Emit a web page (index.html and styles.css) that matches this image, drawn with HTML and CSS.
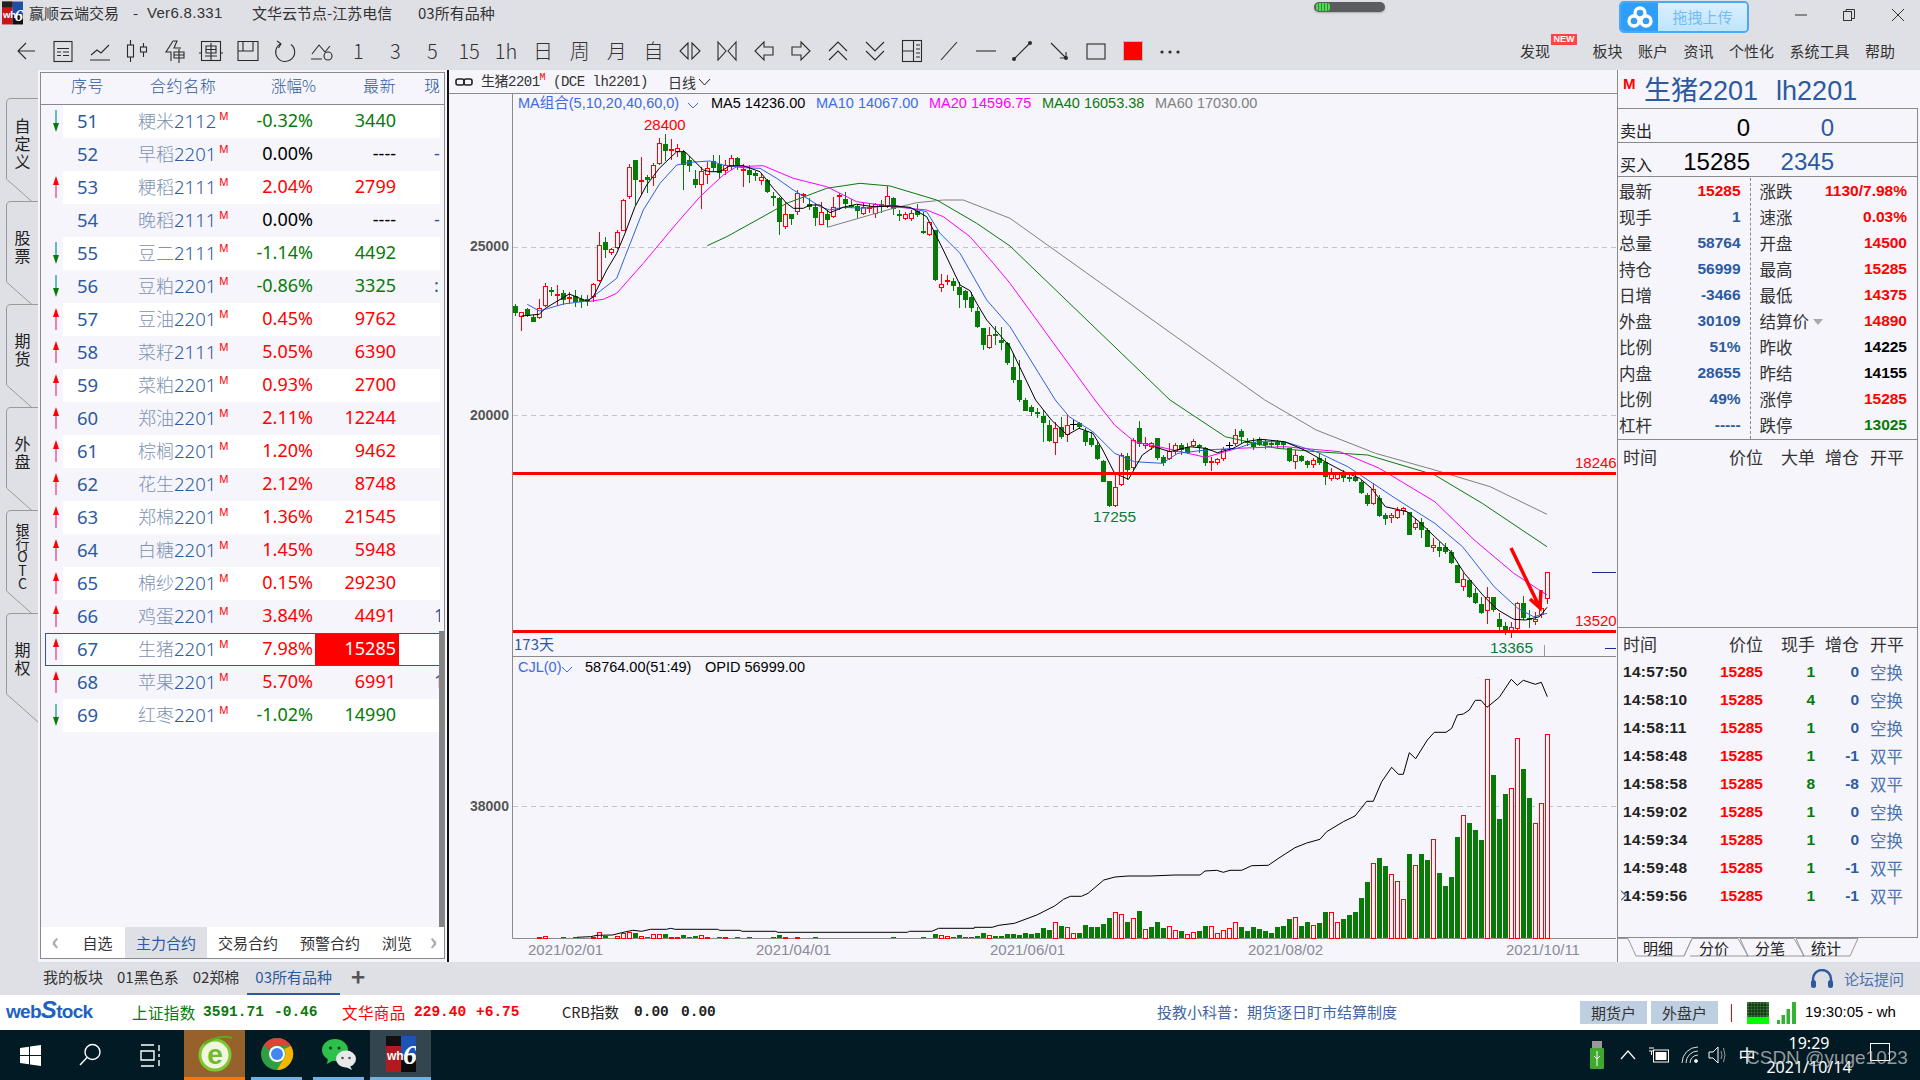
FILE: index.html
```html
<!DOCTYPE html>
<html lang="zh-CN">
<head>
<meta charset="utf-8">
<title>赢顺云端交易</title>
<link rel="stylesheet" href="styles.css">
</head>
<body>
<svg class="sprite" aria-hidden="true">
  <symbol id="up" viewBox="0 0 10 22"><path d="M5 22V6" stroke="#f0508a" stroke-width="1.4"/><path d="M5 0L2 9H8Z" fill="#f00"/></symbol>
  <symbol id="down" viewBox="0 0 10 22"><path d="M5 0V16" stroke="#2aa0a0" stroke-width="1.4"/><path d="M5 22L2 13H8Z" fill="#0a7a0a"/></symbol>
</svg>
<div class="screen">
  <header class="titlebar">
    <svg class="applogo" viewBox="0 0 22 24"><rect width="11" height="24" fill="#c8161d"/><rect x="11" width="11" height="14" fill="#1f4ea3"/><rect x="11" y="14" width="11" height="10" fill="#111"/><rect y="0" width="11" height="6" fill="#222"/><text x="1" y="17" class="logotext">wh</text><text x="13" y="20" class="logotext6">6</text></svg>
    <span class="tt t1">赢顺云端交易</span><span class="tt t2">-</span><span class="tt t3">Ver6.8.331</span><span class="tt t4">文华云节点-江苏电信</span><span class="tt t5">03所有品种</span>
    <div class="pill"><span class="pill-fill"></span></div>
    <div class="upload">
      <span class="upload-ico"><svg width="28" height="24" viewBox="0 0 28 24"><g fill="none" stroke="#fff" stroke-width="3.4"><circle cx="14" cy="8" r="5"/><circle cx="8" cy="16" r="5"/><circle cx="20" cy="16" r="5"/></g></svg></span>
      <span class="upload-txt">拖拽上传</span>
    </div>
    <div class="wbtn"><svg width="14" height="14" viewBox="0 0 14 14"><path d="M1 7H13" stroke="#333"/></svg></div>
    <div class="wbtn"><svg width="14" height="14" viewBox="0 0 14 14" fill="none" stroke="#333"><rect x="1.5" y="3.5" width="8" height="9"/><path d="M4 3.5V1.5H12.5V10.5H9.5"/></svg></div>
    <div class="wbtn wbtn-x"><svg width="14" height="14" viewBox="0 0 14 14"><path d="M1 1L13 13M13 1L1 13" stroke="#333"/></svg></div>
  </header>

  <nav class="toolbar">
    <span class="tb"><svg viewBox="0 0 24 24"><path d="M21 12H4M12 4L4 12L12 20"/></svg></span>
    <span class="tb"><svg viewBox="0 0 24 24"><rect x="3" y="2.5" width="18" height="20"/><path d="M6 9.5H18M6 13H10M12 13H18M6 16.5H10M12 16.5H18"/></svg></span>
    <span class="tb"><svg viewBox="0 0 24 24"><path d="M3 16L9 11L13 14L21 6M2 21H22"/></svg></span>
    <span class="tb"><svg viewBox="0 0 24 24"><rect x="2.5" y="6" width="6" height="12"/><path d="M5.5 1V6M5.5 18V23"/><rect x="15.5" y="8" width="6" height="5"/><path d="M18.5 4V8M18.5 13V18"/></svg></span>
    <span class="tb"><svg viewBox="0 0 24 24"><path d="M11 2L4 13H9V22M11 2H15L12 9H19" /><path d="M12 13H22V19H12ZM12 16H22M17 10V24"/></svg></span>
    <span class="tb"><svg viewBox="0 0 24 24"><rect x="2.5" y="2.5" width="19" height="19"/><path d="M0 14H3M21 14H24M7 7H17V14H7ZM7 10.5H17M12 4V21M6 17H18"/></svg></span>
    <span class="tb"><svg viewBox="0 0 24 24"><path d="M2 2.5H22V21.5H2ZM7 2.5V12H17V2.5M2 12H7"/></svg></span>
    <span class="tb"><svg viewBox="0 0 24 24"><path d="M8 4.5A9.5 9.5 0 1 0 18 5.5M4 2L8 4.8L5.5 9"/></svg></span>
    <span class="tb"><svg viewBox="0 0 24 24"><path d="M2 15L9 6L15 13L20 7M1 20H12"/><circle cx="18" cy="17" r="4"/></svg></span>
    <span class="tb tg">1</span><span class="tb tg">3</span><span class="tb tg">5</span><span class="tb tg">15</span><span class="tb tg">1h</span><span class="tb tg">日</span><span class="tb tg">周</span><span class="tb tg">月</span><span class="tb tg">自</span>
    <span class="tb"><svg viewBox="0 0 24 24"><path d="M10 4L2 12L10 20ZM14 4L22 12L14 20Z"/></svg></span>
    <span class="tb"><svg viewBox="0 0 24 24"><path d="M3 3L11 12L3 21ZM21 3L13 12L21 21Z"/></svg></span>
    <span class="tb"><svg viewBox="0 0 24 24"><path d="M12 3L3 12L12 21V16H21V8H12Z"/></svg></span>
    <span class="tb"><svg viewBox="0 0 24 24"><path d="M12 3L21 12L12 21V16H3V8H12Z"/></svg></span>
    <span class="tb"><svg viewBox="0 0 24 24"><path d="M3 12L12 3L21 12M3 21L12 12L21 21"/></svg></span>
    <span class="tb"><svg viewBox="0 0 24 24"><path d="M3 3L12 12L21 3M3 12L12 21L21 12"/></svg></span>
    <span class="tb"><svg viewBox="0 0 24 24"><rect x="2.5" y="1.5" width="19" height="21"/><path d="M13.5 1.5V22.5M2.5 12H13.5M16 6H20M16 10H20M16 14H20M16 18H20"/></svg></span>
    <span class="tb"><svg viewBox="0 0 24 24"><path d="M4 21L20 3"/></svg></span>
    <span class="tb"><svg viewBox="0 0 24 24"><path d="M2 12H22"/></svg></span>
    <span class="tb"><svg viewBox="0 0 24 24"><path d="M4 20L20 4"/><circle class="dot" cx="4" cy="20" r="2"/><circle class="dot" cx="20" cy="4" r="2"/></svg></span>
    <span class="tb"><svg viewBox="0 0 24 24"><path d="M4 4L19 19M19 13V19H13"/><circle class="dot" cx="19" cy="19" r="2"/></svg></span>
    <span class="tb"><svg viewBox="0 0 24 24"><rect x="3" y="5" width="18" height="15"/></svg></span>
    <span class="tb"><span class="swatch"></span></span>
    <span class="tb"><svg viewBox="0 0 24 24"><circle class="dot" cx="4" cy="13" r="1.6"/><circle class="dot" cx="12" cy="13" r="1.6"/><circle class="dot" cx="20" cy="13" r="1.6"/></svg></span>
    <div class="menu">
      <span class="mi mi-new">发现<em class="new">NEW</em></span>
      <span class="mi">板块</span><span class="mi">账户</span><span class="mi">资讯</span><span class="mi">个性化</span><span class="mi">系统工具</span><span class="mi">帮助</span>
    </div>
  </nav>

  <main class="main">
    <aside class="vtabs">
      <div class="vtab"><svg viewBox="0 0 38 115"><path d="M38 .5H11Q6.500 .5 6.500 5V81L38 109"/></svg><span>自定义</span></div>
      <div class="vtab"><svg viewBox="0 0 38 115"><path d="M38 .5H11Q6.500 .5 6.500 5V81L38 109"/></svg><span>股票</span></div>
      <div class="vtab"><svg viewBox="0 0 38 115"><path d="M38 .5H11Q6.500 .5 6.500 5V81L38 109"/></svg><span>期货</span></div>
      <div class="vtab"><svg viewBox="0 0 38 115"><path d="M38 .5H11Q6.500 .5 6.500 5V81L38 109"/></svg><span>外盘</span></div>
      <div class="vtab"><svg viewBox="0 0 38 115"><path d="M38 .5H11Q6.500 .5 6.500 5V81L38 109"/></svg><span>银行OTC</span></div>
      <div class="vtab"><svg viewBox="0 0 38 115"><path d="M38 .5H11Q6.500 .5 6.500 5V81L38 109"/></svg><span>期权</span></div>
    </aside>

    <section class="list">
      <div class="list-box">
        <div class="lhead">
          <span class="h-no">序号</span><span class="h-name">合约名称</span><span class="h-pct">涨幅%</span><span class="h-last">最新</span><span class="h-trail">现手</span>
        </div>
        <div class="rows">
          <div class="row alt dn"><span class="c-a"><svg><use href="#down"/></svg></span><span class="c-no">51</span><span class="c-name"><i>粳米</i>2112<sup>M</sup></span><span class="c-pct">-0.32%</span><span class="c-last">3440</span><span class="c-trail"></span></div>
          <div class="row fl"><span class="c-a"></span><span class="c-no">52</span><span class="c-name"><i>早稻</i>2201<sup>M</sup></span><span class="c-pct">0.00%</span><span class="c-last">----</span><span class="c-trail">-</span></div>
          <div class="row alt up"><span class="c-a"><svg><use href="#up"/></svg></span><span class="c-no">53</span><span class="c-name"><i>粳稻</i>2111<sup>M</sup></span><span class="c-pct">2.04%</span><span class="c-last">2799</span><span class="c-trail"></span></div>
          <div class="row fl"><span class="c-a"></span><span class="c-no">54</span><span class="c-name"><i>晚稻</i>2111<sup>M</sup></span><span class="c-pct">0.00%</span><span class="c-last">----</span><span class="c-trail">-</span></div>
          <div class="row alt dn"><span class="c-a"><svg><use href="#down"/></svg></span><span class="c-no">55</span><span class="c-name"><i>豆二</i>2111<sup>M</sup></span><span class="c-pct">-1.14%</span><span class="c-last">4492</span><span class="c-trail"></span></div>
          <div class="row dn"><span class="c-a"><svg><use href="#down"/></svg></span><span class="c-no">56</span><span class="c-name"><i>豆粕</i>2201<sup>M</sup></span><span class="c-pct">-0.86%</span><span class="c-last">3325</span><span class="c-trail">:</span></div>
          <div class="row alt up"><span class="c-a"><svg><use href="#up"/></svg></span><span class="c-no">57</span><span class="c-name"><i>豆油</i>2201<sup>M</sup></span><span class="c-pct">0.45%</span><span class="c-last">9762</span><span class="c-trail"></span></div>
          <div class="row up"><span class="c-a"><svg><use href="#up"/></svg></span><span class="c-no">58</span><span class="c-name"><i>菜籽</i>2111<sup>M</sup></span><span class="c-pct">5.05%</span><span class="c-last">6390</span><span class="c-trail"></span></div>
          <div class="row alt up"><span class="c-a"><svg><use href="#up"/></svg></span><span class="c-no">59</span><span class="c-name"><i>菜粕</i>2201<sup>M</sup></span><span class="c-pct">0.93%</span><span class="c-last">2700</span><span class="c-trail"></span></div>
          <div class="row up"><span class="c-a"><svg><use href="#up"/></svg></span><span class="c-no">60</span><span class="c-name"><i>郑油</i>2201<sup>M</sup></span><span class="c-pct">2.11%</span><span class="c-last">12244</span><span class="c-trail"></span></div>
          <div class="row alt up"><span class="c-a"><svg><use href="#up"/></svg></span><span class="c-no">61</span><span class="c-name"><i>棕榈</i>2201<sup>M</sup></span><span class="c-pct">1.20%</span><span class="c-last">9462</span><span class="c-trail"></span></div>
          <div class="row up"><span class="c-a"><svg><use href="#up"/></svg></span><span class="c-no">62</span><span class="c-name"><i>花生</i>2201<sup>M</sup></span><span class="c-pct">2.12%</span><span class="c-last">8748</span><span class="c-trail"></span></div>
          <div class="row alt up"><span class="c-a"><svg><use href="#up"/></svg></span><span class="c-no">63</span><span class="c-name"><i>郑棉</i>2201<sup>M</sup></span><span class="c-pct">1.36%</span><span class="c-last">21545</span><span class="c-trail"></span></div>
          <div class="row up"><span class="c-a"><svg><use href="#up"/></svg></span><span class="c-no">64</span><span class="c-name"><i>白糖</i>2201<sup>M</sup></span><span class="c-pct">1.45%</span><span class="c-last">5948</span><span class="c-trail"></span></div>
          <div class="row alt up"><span class="c-a"><svg><use href="#up"/></svg></span><span class="c-no">65</span><span class="c-name"><i>棉纱</i>2201<sup>M</sup></span><span class="c-pct">0.15%</span><span class="c-last">29230</span><span class="c-trail"></span></div>
          <div class="row up"><span class="c-a"><svg><use href="#up"/></svg></span><span class="c-no">66</span><span class="c-name"><i>鸡蛋</i>2201<sup>M</sup></span><span class="c-pct">3.84%</span><span class="c-last">4491</span><span class="c-trail">1</span></div>
          <div class="row alt up sel"><span class="c-a"><svg><use href="#up"/></svg></span><span class="c-no">67</span><span class="c-name"><i>生猪</i>2201<sup>M</sup></span><span class="c-pct">7.98%</span><span class="c-last">15285</span><span class="c-trail"></span></div>
          <div class="row up"><span class="c-a"><svg><use href="#up"/></svg></span><span class="c-no">68</span><span class="c-name"><i>苹果</i>2201<sup>M</sup></span><span class="c-pct">5.70%</span><span class="c-last">6991</span><span class="c-trail">1</span></div>
          <div class="row alt dn"><span class="c-a"><svg><use href="#down"/></svg></span><span class="c-no">69</span><span class="c-name"><i>红枣</i>2201<sup>M</sup></span><span class="c-pct">-1.02%</span><span class="c-last">14990</span><span class="c-trail"></span></div>
          <span class="scroll"></span>
        </div>
        <div class="ltabs">
          <span class="la">‹</span><span class="lt lt-s">自选</span><span class="lt on">主力合约</span><span class="lt">交易合约</span><span class="lt">预警合约</span><span class="lt lt-b">浏览</span><span class="la la-r">›</span>
        </div>
      </div>
    </section>

    <section class="chart">
      <div class="chead">
        <svg class="link" width="18" height="8" viewBox="0 0 18 8"><g fill="none" stroke="#222" stroke-width="1.6"><rect x="1" y="1" width="8" height="6" rx="2"/><rect x="9" y="1" width="8" height="6" rx="2"/></g></svg>
        <span class="cname">生猪2201<sup>M</sup> (DCE lh2201)</span>
        <span class="cper">日线</span><svg width="13" height="8" viewBox="0 0 13 8"><path d="M1 1L6.500 7L12 1" fill="none" stroke="#222"/></svg>
      </div>
      <svg id="plot" class="plot" viewBox="449 94 1168 868" width="1168" height="868"></svg>
    </section>

    <aside class="side">
      <div class="s-title"><b>M</b><span>生猪2201</span><span class="s-code">lh2201</span></div>
      <div class="s-quote"><label>卖出</label><span class="q1">0</span><span class="q2">0</span></div>
      <div class="s-quote"><label>买入</label><span class="q1">15285</span><span class="q2">2345</span></div>
      <div class="s-info">
        <div class="icol">
          <div class="ir"><label>最新</label><b class="r">15285</b></div>
          <div class="ir"><label>现手</label><b class="bl">1</b></div>
          <div class="ir"><label>总量</label><b class="bl">58764</b></div>
          <div class="ir"><label>持仓</label><b class="bl">56999</b></div>
          <div class="ir"><label>日增</label><b class="bl">-3466</b></div>
          <div class="ir"><label>外盘</label><b class="bl">30109</b></div>
          <div class="ir"><label>比例</label><b class="bl">51%</b></div>
          <div class="ir"><label>内盘</label><b class="bl">28655</b></div>
          <div class="ir"><label>比例</label><b class="bl">49%</b></div>
          <div class="ir"><label>杠杆</label><b class="bl">-----</b></div>
        </div>
        <div class="icol icol-r">
          <div class="ir"><label>涨跌</label><b class="r">1130/7.98%</b></div>
          <div class="ir"><label>速涨</label><b class="r">0.03%</b></div>
          <div class="ir"><label>开盘</label><b class="r">14500</b></div>
          <div class="ir"><label>最高</label><b class="r">15285</b></div>
          <div class="ir"><label>最低</label><b class="r">14375</b></div>
          <div class="ir"><label>结算价<i class="caret"></i></label><b class="r">14890</b></div>
          <div class="ir"><label>昨收</label><b class="k">14225</b></div>
          <div class="ir"><label>昨结</label><b class="k">14155</b></div>
          <div class="ir"><label>涨停</label><b class="r">15285</b></div>
          <div class="ir"><label>跌停</label><b class="g">13025</b></div>
        </div>
      </div>
      <div class="tape">
        <div class="thead thead-a"><span>时间</span><span>价位</span><span>大单</span><span>增仓</span><span>开平</span></div>
      </div>
      <div class="trades">
        <div class="thead"><span>时间</span><span>价位</span><span>现手</span><span>增仓</span><span>开平</span></div>
        <div class="tr"><span>14:57:50</span><b>15285</b><em>1</em><strong>0</strong><u>空换</u></div>
        <div class="tr"><span>14:58:10</span><b>15285</b><em>4</em><strong>0</strong><u>空换</u></div>
        <div class="tr"><span>14:58:11</span><b>15285</b><em>1</em><strong>0</strong><u>空换</u></div>
        <div class="tr"><span>14:58:48</span><b>15285</b><em>1</em><strong>-1</strong><u>双平</u></div>
        <div class="tr"><span>14:58:58</span><b>15285</b><em>8</em><strong>-8</strong><u>双平</u></div>
        <div class="tr"><span>14:59:02</span><b>15285</b><em>1</em><strong>0</strong><u>空换</u></div>
        <div class="tr"><span>14:59:34</span><b>15285</b><em>1</em><strong>0</strong><u>空换</u></div>
        <div class="tr"><span>14:59:48</span><b>15285</b><em>1</em><strong>-1</strong><u>双平</u></div>
        <div class="tr tr-cur"><span>14:59:56</span><b>15285</b><em>1</em><strong>-1</strong><u>双平</u></div>
      </div>
      <div class="stabs">
        <svg class="stabs-bg" viewBox="0 0 303 24"><path d="M0 .5H10L18 18H66L74 .5M74 .5L66 18M74 .5H120L130 18H72M130 18L122 .5M122 .5H176L186 18H128M186 18L178 .5M178 .5H240L232 18H184"/></svg>
        <span>明细</span><span>分价</span><span>分笔</span><span>统计</span>
      </div>
    </aside>
  </main>

  <div class="sheetbar">
    <span>我的板块</span><span>01黑色系</span><span>02郑棉</span><span class="active">03所有品种</span><span class="plus">+</span>
    <span class="forum"><svg width="24" height="20" viewBox="0 0 24 20"><path d="M3 14V10A9 9 0 0 1 21 10V14" fill="none" stroke="#2d5a9e" stroke-width="2.400"/><rect x="1" y="11" width="5" height="8" rx="2.500" fill="#2d5a9e"/><rect x="18" y="11" width="5" height="8" rx="2.500" fill="#2d5a9e"/></svg>论坛提问</span>
  </div>

  <footer class="status">
    <span class="webstock">web<i>S</i>tock</span>
    <span class="tk w71 lab g">上证指数</span><span class="tk w71 num g">3591.71</span><span class="tk w68 num g">-0.46</span>
    <span class="tk w72 lab r">文华商品</span><span class="tk w62 num r">229.40</span><span class="tk w86 num r">+6.75</span>
    <span class="tk w72 lab lab-k k">CRB指数</span><span class="tk w47 num k">0.00</span><span class="tk w47 num k">0.00</span>
    <span class="notice">投教小科普：期货逐日盯市结算制度</span>
    <span class="acct">期货户</span><span class="acct">外盘户</span>
    <span class="redbar"></span>
    <svg class="meter" width="22" height="22" viewBox="0 0 22 22"><rect width="22" height="22" fill="#3c7a3c"/><rect y="15" width="22" height="7" fill="#0f0"/><path d="M0 3H22M0 6H22M0 9H22M0 12H22M3 0V15M6 0V15M9 0V15M12 0V15M15 0V15M18 0V15" stroke="#0a2a0a"/></svg>
    <svg class="bars" width="20" height="22" viewBox="0 0 20 22"><g fill="#34b234"><rect y="18" width="3" height="4"/><rect x="4.500" y="13" width="3.500" height="9"/><rect x="9.500" y="7" width="3.500" height="15"/><rect x="15" y="0" width="4" height="22"/></g></svg>
    <span class="sclock">19:30:05 - wh</span>
  </footer>

  <div class="taskbar">
    <span class="ti"><svg width="21" height="21" viewBox="0 0 21 21"><path d="M0 3L9 1.800V10H0ZM10 1.600L21 0V10H10ZM0 11H9V19.200L0 18ZM10 11H21V21L10 19.400Z" fill="#fff"/></svg></span>
    <span class="ti"><svg width="22" height="24" viewBox="0 0 22 24" fill="none" stroke="#fff" stroke-width="1.400"><circle cx="13.500" cy="9" r="7.500"/><path d="M8 14.500L1 22"/></svg></span>
    <span class="ti"><svg width="21" height="23" viewBox="0 0 21 23" fill="none" stroke="#fff" stroke-width="1.400"><path d="M1 7H14V16H1ZM1 1H14M1 22H14M19 1V7M19 10V13M19 16V22"/></svg></span>
    <span class="app app-ie"><svg width="38" height="38" viewBox="0 0 38 38"><circle cx="19" cy="20" r="15" fill="#f1f6df"/><circle cx="19" cy="20" r="15" fill="none" stroke="#7dc832" stroke-width="3"/><path d="M8 9Q24-1 36 3" fill="none" stroke="#63a91e" stroke-width="2"/><text x="19" y="29" class="ie-e">e</text></svg></span>
    <span class="app app-b"><svg width="34" height="34" viewBox="0 0 34 34"><circle cx="17" cy="17" r="16" fill="#2f9e44"/><path d="M17 1A16 16 0 0 1 31 9L17 9A8 8 0 0 0 9 13L4 8A16 16 0 0 1 17 1Z" fill="#db4437"/><path d="M31 9A16 16 0 0 1 17 33L24 21A8 8 0 0 0 24 12Z" fill="#f4b400"/><circle cx="17" cy="17" r="8" fill="#fff"/><circle cx="17" cy="17" r="6" fill="#4285f4"/></svg></span>
    <span class="app app-b"><svg width="36" height="32" viewBox="0 0 36 32"><ellipse cx="14" cy="12" rx="13" ry="11" fill="#2dc04b"/><path d="M7 20L6 26L13 22Z" fill="#2dc04b"/><circle cx="9.500" cy="10" r="1.500" fill="#0b3b1b"/><circle cx="18" cy="10" r="1.500" fill="#0b3b1b"/><ellipse cx="25" cy="21" rx="10" ry="8.500" fill="#e8e8e8"/><path d="M29 28L31 32L25 29Z" fill="#e8e8e8"/><circle cx="21.500" cy="20" r="1.300" fill="#555"/><circle cx="28.500" cy="20" r="1.300" fill="#555"/></svg></span>
    <span class="app app-wh"><svg width="30" height="36" viewBox="0 0 30 36"><rect width="15" height="36" fill="#b31a1f"/><rect width="15" height="10" fill="#111"/><rect x="15" width="15" height="20" fill="#1d54b4"/><rect x="15" y="20" width="15" height="16" fill="#0b0b0b"/><text x="1" y="24" class="wh-t">wh</text><text x="17" y="28" class="wh-6">6</text></svg></span>
    <div class="tray">
      <span class="tr-i tr-usb"><svg width="14" height="28" viewBox="0 0 14 28"><rect x="2" y="0" width="10" height="8" fill="#999"/><rect y="7" width="14" height="21" rx="1" fill="#3fa82e"/><path d="M7 10V25M4 15L7 18L10 15" stroke="#fff" fill="none"/></svg></span>
      <span class="tr-i"><svg width="16" height="10" viewBox="0 0 16 10"><path d="M1 9L8 1L15 9" fill="none" stroke="#fff" stroke-width="1.200"/></svg></span>
      <span class="tr-i"><svg width="20" height="16" viewBox="0 0 20 16"><rect x="4.500" y="3" width="15" height="12" fill="#111" stroke="#fff"/><rect x="6.500" y="5" width="11" height="8" fill="#fff"/><path d="M0 1H5M0 4H5M2.500 4V8" stroke="#fff"/></svg></span>
      <span class="tr-i"><svg width="18" height="18" viewBox="0 0 18 18" fill="none" stroke="#ddd"><path d="M1 17A16 16 0 0 1 17 1M5 17A12 12 0 0 1 17 5M9 17A8 8 0 0 1 17 9"/><circle cx="15" cy="15" r="1.500" fill="#fff"/></svg></span>
      <span class="tr-i tr-s"><svg width="18" height="20" viewBox="0 0 18 20" fill="none" stroke="#fff"><path d="M1 7H5L10 2V18L5 13H1Z"/><path d="M13 6Q15 10 13 14M15.500 3Q18.500 10 15.500 17" stroke="#999"/></svg></span>
      <span class="tr-i tr-ime">中</span>
      <span class="tr-clock">19:29<br>2021/10/14</span>
      <span class="tr-note"></span>
    </div>
    <span class="watermark">CSDN @yuge1023</span>
  </div>
</div>
<script src="chart.js"></script>
</body>
</html>
```

FILE: styles.css
```css
* { box-sizing: border-box; }
html, body { margin: 0; width: 1920px; height: 1080px; overflow: hidden; }
body { font-family: "Noto Sans CJK SC", "Liberation Sans", sans-serif; color: #222; background: #dfe0e5; }
.sprite { position: absolute; width: 0; height: 0; }
.screen { display: flex; flex-direction: column; width: 1920px; height: 1080px; }

/* title bar */
.titlebar { height: 33px; display: flex; align-items: flex-start; position: relative; flex: none; }
.applogo { width: 21px; height: 24px; margin: 1px 0 0 2px; flex: none; }
.logotext { font: bold 10px "Liberation Sans", sans-serif; fill: #fff; }
.logotext6 { font: italic bold 18px "Liberation Serif", serif; fill: #fff; }
.tt { font-size: 15px; line-height: 20px; margin-top: 3px; color: #333; white-space: nowrap; }
.t1 { margin-left: 6px; width: 90px; }
.t2 { margin-left: 14px; width: 14px; }
.t3 { width: 105px; font-family: "Liberation Sans", sans-serif; letter-spacing: .3px; }
.t4 { width: 166px; }
.t5 { width: 80px; }
.pill { margin: 2px 234px 0 auto; width: 71px; height: 10px; background: #5a5c60; border-radius: 5px; padding: 1px 2px; box-shadow: 0 1px 2px #aaa; flex: none; }
.pill-fill { display: block; width: 14px; height: 8px; border-radius: 3px; background: repeating-linear-gradient(90deg, #4ddb4d 0 2px, #2f8f3f 2px 3px); }
.upload { width: 130px; height: 32px; margin: 1px 28px 0 0; border: 2px solid #4aa8f4; border-radius: 5px; display: flex; overflow: hidden; flex: none; }
.upload-ico { width: 37px; background: #2f9ef8; display: flex; align-items: center; justify-content: center; }
.upload-txt { flex: 1; background: linear-gradient(#d9effe, #bfe4fe); color: #74bdf3; font-size: 15px; line-height: 28px; text-align: center; }
.wbtn { width: 48px; height: 30px; display: flex; align-items: center; justify-content: center; flex: none; }
.wbtn-x { width: 44px; margin-left: 3px; }

/* toolbar */
.toolbar { height: 37px; display: flex; align-items: center; padding: 0 0 2px 8px; flex: none; }
.tb { flex: 0 0 36.900px; height: 24px; display: flex; align-items: center; justify-content: center; }
.tb svg { width: 24px; height: 24px; fill: none; stroke: #2a2a2a; stroke-width: 1.100; }
.tb svg .dot { fill: #2a2a2a; stroke: none; }
.tg { font-size: 20px; font-weight: 300; line-height: 24px; color: #333; font-family: "Noto Sans CJK SC", sans-serif; }
.swatch { width: 20px; height: 20px; background: #f00; border: 1px solid #bbb; }
.menu { margin-left: auto; padding-right: 25px; display: flex; gap: 15.500px; }
.mi { font-size: 15px; line-height: 22px; color: #333; position: relative; white-space: nowrap; }
.mi-new { margin-right: 27px; }
.new { position: absolute; left: 31px; top: -6px; width: 26px; height: 11px; background: #f44; color: #fff; font: bold 9px/11px "Liberation Sans", sans-serif; text-align: center; }

/* main */
.main { height: 892px; display: flex; flex: none; }
.vtabs { width: 38px; padding-top: 28px; flex: none; }
.vtab { height: 103px; position: relative; display: flex; justify-content: center; padding-left: 7px; }
.vtab svg { position: absolute; left: 0; top: 0; width: 38px; height: 115px; }
.vtab path { fill: #dfe0e5; stroke: #9a9a9a; stroke-width: 1; }
.vtab span { position: relative; height: 94px; writing-mode: vertical-rl; text-orientation: upright; font-size: 16px; line-height: 20px; letter-spacing: 2px; text-align: center; color: #222; }
.vtab:nth-child(5) span { font-size: 14px; letter-spacing: -.5px; }

.list { width: 409px; flex: none; background: #f5f5fb; padding: 2px 2px 3px 2px; position: relative; }
.list-box { height: 887px; border: 1px solid #8a8a8a; display: flex; flex-direction: column; }
.lhead { height: 32px; flex: none; border-bottom: 1px solid #8a8a8a; display: flex; font-size: 16px; line-height: 24px; color: #2d5a9e; letter-spacing: .6px; font-weight: 300; overflow: hidden; white-space: nowrap; }
.h-no { margin-left: 30px; width: 79px; }
.h-name { width: 121px; }
.h-pct { width: 92px; letter-spacing: 0; font-size: 15.500px; }
.h-last { width: 61px; }
.h-trail { width: 16px; overflow: hidden; position: relative; }
.h-trail::after { content: "›"; position: absolute; right: 0; top: 0; font-size: 20px; line-height: 22px; }
.rows { flex: 1; position: relative; min-height: 0; }
.row { height: 33px; width: 399px; display: grid; grid-template-columns: 22px 75px 106px 71px 84px 41px; align-items: center; font-size: 18px; line-height: 29px; white-space: nowrap; font-family: "Noto Sans", "Noto Sans CJK SC", sans-serif; }
.row > span { margin-bottom: 2px; }
.row.alt { background: linear-gradient(90deg, transparent 22px, #fff 22px); }
.c-a { height: 22px; display: flex; justify-content: center; padding-left: 8px; }
.c-a svg { width: 10px; height: 22px; }
.c-no { padding-left: 14px; color: #2d5a9e; font-size: 18.500px; }
.c-name { color: #2d5a9e; font-weight: 300; font-size: 18.500px; }
.c-name i { font-style: normal; color: #7d91b3; font-family: "Noto Sans CJK SC", sans-serif; font-size: 18px; }
.c-name sup { color: #f00; font-size: 11px; line-height: 1; vertical-align: 8px; margin-left: 3px; font-family: "Liberation Sans", sans-serif; }
.c-pct { text-align: right; padding-right: 2px; }
.c-last { text-align: right; padding-right: 3px; }
.c-trail { padding-left: 35px; overflow: hidden; color: #2d5a9e; }
.up .c-pct, .up .c-last { color: #f00; }
.dn .c-pct, .dn .c-last { color: #087a08; }
.fl .c-pct, .fl .c-last { color: #000; }
.sel { position: relative; background: linear-gradient(90deg, transparent 22px, #fff 22px); }
.sel::after { content: ""; position: absolute; left: 4px; right: 0; top: 0; bottom: 0; border: 1.500px solid #2d5a9e; pointer-events: none; }
.sel .c-last { background: #f00; color: #fff; margin-bottom: 0; height: 31px; }
.scroll { position: absolute; right: 0; top: 526px; bottom: 0; width: 5px; background: #848484; }
.ltabs { height: 31px; flex: none; background: #fff; display: flex; align-items: stretch; font-size: 15px; line-height: 32px; color: #333; text-align: center; }
.la { flex: 0 0 29px; color: #aaa; font-size: 24px; line-height: 26px; font-weight: bold; }
.la-r { flex: 1 1 0; }
.lt { flex: 0 0 82px; }
.lt-s { flex-basis: 55px; }
.lt-b { flex-basis: 52px; }
.lt.on { background: #dfe0e5; color: #2d5a9e; }

.chart { width: 1170px; flex: none; border-left: 2px solid #111; background: #f5f5fb; display: flex; flex-direction: column; }
.chead { height: 24px; flex: none; border-bottom: 1px solid #8a8a8a; display: flex; align-items: center; padding-left: 6px; }
.link { margin-right: 8px; }
.cname { width: 187px; font: 14px/22px "Liberation Mono", "Noto Sans CJK SC", monospace; color: #333; white-space: nowrap; letter-spacing: -.5px; }
.cname sup { font-size: 10px; color: #f00; line-height: 1; vertical-align: 6px; }
.cper { font-size: 14px; line-height: 22px; color: #333; margin-right: 2px; }
.plot { display: block; }
.plot text { font-family: "Liberation Sans", sans-serif; font-size: 14.500px; }
.plot .ax { fill: #555; font-weight: bold; font-size: 14px; }
.plot .dt { fill: #8a8a98; font-size: 15px; }
.plot .m0 { fill: #4169e1; }
.plot .m1 { fill: #000; }
.plot .m2 { fill: #3a6ee8; }
.plot .m3 { fill: #f0f; }
.plot .m4 { fill: #0a7a0a; }
.plot .m5 { fill: #808080; }
.plot .red { fill: #f00; font-size: 15px; }
.plot .grn { fill: #0a7a3a; font-size: 15.500px; }
.plot .days { fill: #2d5a9e; font-size: 15px; font-family: "Noto Sans CJK SC", sans-serif; }
.plot .m0c { font-family: "Liberation Sans", "Noto Sans CJK SC", sans-serif; }

/* side panel */
.side { width: 303px; flex: none; background: #f5f5fb; border-left: 1px solid #8a8a8a; display: flex; flex-direction: column; position: relative; }
.side > div { width: 300px; border-right: 1px solid #8a8a8a; }
.s-title { height: 39px; border-bottom: 1px solid #8a8a8a; display: flex; align-items: center; color: #2d5a9e; font-size: 27px; line-height: 36px; padding: 3px 0 0 26px; position: relative; border-right: 0 !important; font-family: "Liberation Sans", "Noto Sans CJK SC", sans-serif; }
.s-title b { position: absolute; left: 5px; top: 6px; font-size: 15px; line-height: 16px; color: #f00; }
.s-code { margin-left: 18px; }
.s-quote { height: 34px; border-bottom: 1px solid #8a8a8a; display: flex; align-items: center; font-family: "Liberation Sans", sans-serif; font-size: 24px; line-height: 30px; position: relative; padding-top: 4px; }
.s-quote label { position: absolute; left: 2px; top: 10px; font-size: 16px; line-height: 22px; font-family: "Noto Sans CJK SC", sans-serif; }
.q1 { width: 132px; text-align: right; color: #000; }
.q2 { width: 84px; text-align: right; color: #2d5a9e; }
.s-info { height: 263px; border-bottom: 1px solid #8a8a8a; display: flex; padding-top: 1px; }
.icol { width: 133px; border-right: 1px dashed #8a8a8a; padding: 0 9px 0 1px; }
.icol-r { width: 167px; border-right: 0; padding: 0 10px 0 9px; }
.ir { height: 26px; display: flex; justify-content: space-between; align-items: center; }
.ir label { font-size: 16.500px; line-height: 26px; color: #333; position: relative; }
.ir b { font: bold 15.500px/26px "Liberation Sans", sans-serif; }
.caret { position: absolute; width: 0; height: 0; border: 5px solid transparent; border-top: 6px solid #aaa; border-bottom: 0; left: 53px; top: 11px; }
b.r { color: #f00; }
b.bl { color: #2d5a9e; }
b.k { color: #000; }
b.g { color: #087a08; }
.tape { height: 188px; border-bottom: 1px solid #8a8a8a; }
.trades { height: 310px; border-bottom: 1px solid #8a8a8a; }
.thead, .tr { display: grid; grid-template-columns: 77px 63px 52px 44px 45px; padding-left: 5px; }
.thead { height: 30px; font-size: 17px; line-height: 31px; color: #333; }
.thead-a { height: 36px; line-height: 34px; }
.thead span { text-align: right; }
.thead span:first-child { text-align: left; }
.tr { height: 28px; line-height: 28px; font: bold 15.500px/28px "Liberation Sans", sans-serif; position: relative; }
.tr span { color: #222; letter-spacing: .3px; }
.tr b { color: #f00; text-align: right; }
.tr em { color: #087a08; font-style: normal; text-align: right; }
.tr strong { color: #2d5a9e; text-align: right; }
.tr u { text-decoration: none; font: 400 16.500px/28px "Noto Sans CJK SC", sans-serif; color: #4a72ad; padding-left: 11px; white-space: nowrap; }
.tr-cur::before { content: ""; position: absolute; left: 0; top: 10px; width: 6px; height: 6px; border-top: 1.500px solid #2d5a9e; border-right: 1.500px solid #2d5a9e; transform: rotate(45deg); }
.stabs { height: 24px; width: 303px !important; border-right: 0 !important; display: flex; position: relative; padding-left: 12px; font-size: 15px; line-height: 19px; color: #222; }
.stabs-bg { position: absolute; left: 0; top: 0; width: 303px; height: 24px; fill: none; stroke: #9a9a9a; }
.stabs span { width: 56px; text-align: center; position: relative; }

/* sheet bar */
.sheetbar { height: 33px; flex: none; display: flex; align-items: flex-start; padding-left: 43px; gap: 14px; font-size: 15px; line-height: 30px; color: #333; }
.sheetbar .active { color: #2d5a9e; padding: 0 8px; margin: 0 -8px 0 -6px; border-bottom: 2px solid #2d5a9e; height: 33px; }
.plus { font-size: 24px; margin-left: 5px; color: #555; font-weight: bold; line-height: 28px; }
.forum { margin-left: auto; padding-right: 16px; display: flex; align-items: center; gap: 10px; color: #4a72ad; line-height: 34px; }

/* status */
.status { height: 35px; flex: none; background: #fff; display: flex; align-items: center; position: relative; padding-bottom: 2px; }
.webstock { width: 132px; padding-left: 6px; font: bold 19px/30px "Liberation Sans", sans-serif; color: #1c62c0; letter-spacing: -.7px; }
.webstock i { font-style: italic; font-size: 24px; line-height: 20px; }
.tk { white-space: nowrap; line-height: 26px; }
.w71 { width: 71px; } .w68 { width: 68px; } .w72 { width: 72px; } .w62 { width: 62px; } .w86 { width: 86px; } .w47 { width: 47px; }
.lab { font-size: 15.500px; letter-spacing: .4px; }
.lab-k { font-size: 14.500px; letter-spacing: 0; }
.num { font: bold 14.500px/26px "Liberation Mono", monospace; }
.tk.g { color: #087a08; } .tk.r { color: #f00; } .tk.k { color: #222; }
.notice { margin-left: 429px; width: 423px; font-size: 15px; color: #3e66a6; }
.acct { width: 67px; height: 23px; margin: 2px 4px 0 0; background: #bfcfe2; color: #333; font-size: 15px; line-height: 23px; text-align: center; }
.redbar { width: 1px; height: 18px; background: #f00; margin: 2px 16px 0 9px; }
.meter { margin: 2px 8px 0 -1px; }
.bars { margin: 2px 8px 0 0; }
.sclock { font: 15px/20px "Liberation Sans", sans-serif; color: #000; white-space: nowrap; }

/* taskbar */
.taskbar { height: 50px; flex: none; background: #021a24; display: flex; align-items: stretch; position: relative; color: #fff; }
.ti { width: 60px; display: flex; align-items: center; justify-content: center; }
.app { height: 50px; display: flex; align-items: center; justify-content: center; border-bottom: 3px solid #6fb3e4; }
.app-ie { width: 61px; margin-left: 4px; background: #96612b; border-bottom-color: #f7760a; }
.app-b { width: 51px; margin-left: 6px; }
.app-b + .app-b { margin-left: 11px; }
.app-wh { width: 61px; margin-left: 6px; background: #33454f; }
.ie-e { font: bold 28px "Liberation Sans", sans-serif; fill: #6fbb2c; text-anchor: middle; }
.wh-t { font: bold 12px "Liberation Sans", sans-serif; fill: #fff; }
.wh-6 { font: italic bold 28px "Liberation Serif", serif; fill: #fff; }
.tray { margin-left: auto; display: flex; align-items: center; }
.tr-i { width: 31px; display: flex; justify-content: center; }
.tr-s { width: 24px; }
.tr-ime { width: 36px; font-size: 17px; line-height: 22px; }
.tr-clock { width: 88px; font: 16px/24px "Noto Sans", sans-serif; text-align: center; white-space: nowrap; }
.tr-note { width: 20px; height: 18px; border: 1px solid #fff; margin: -6px 30px 0 17px; }
.watermark { position: absolute; left: 1746px; top: 17px; font: 19px/22px "Liberation Sans", sans-serif; color: rgba(205, 205, 205, .72); white-space: nowrap; }
```

FILE: chart.js
```js
(function () {
  var NS = 'http://www.w3.org/2000/svg';
  var svg = document.getElementById('plot');
  var RED = '#f00', GRN = '#087a08', BG = '#f5f5fb';
  function el(n, a, parent) {
    var e = document.createElementNS(NS, n);
    for (var k in a) e.setAttribute(k, a[k]);
    (parent || svg).appendChild(e);
    return e;
  }
  function txt(x, y, s, cls, anchor) {
    var t = el('text', { x: x, y: y, 'class': cls });
    if (anchor) t.setAttribute('text-anchor', anchor);
    t.textContent = s;
    return t;
  }
  var X = function (i) { return Math.round(515.3 + 6 * i); };

  // grid
  el('path', { d: 'M513 247.500H1616M513 415.500H1616M513 806.500H1616', stroke: '#c4c4c8', 'stroke-dasharray': '5 4', fill: 'none' });
  // axes and pane divider
  el('path', { d: 'M512.500 94V938.500H1616M513 656.500H1616', stroke: '#8a8a8a', fill: 'none' });

  // candles: colour, high, body top, body bottom, low
  var A = 'g 612 618 638 648,r 635 637 650 692,g 625 628 648 652,g 645 650 665 666,r 598 625 655 658,r 548 558 617 620,g 560 570 573 587,r 556 583 587 620,g 570 579 601 614,r 575 591 597 610,g 570 589 605 620,g 585 597 605 624,g 585 597 603 617,r 550 552 590 608,r 396 436 542 545,g 412 427 450 476,r 445 448 458 465,r 390 397 445 447,r 298 300 392 395,r 193 202 292 298,g 180 181 240 315,r 172 240 245 285,g 225 232 240 280,r 190 196 233 260,r 113 130 192 195,g 102 132 152 183,r 118 148 152 180,r 132 145 155 170,g 150 155 195 270,g 168 180 198 215,g 210 238 255 263,r 200 214 254 326,r 185 203 224 252,g 165 182 204 215,g 165 192 218 237,r 180 195 212 225,r 166 175 200 212,g 170 174 195 210,r 193 208 212 263,g 195 209 224 250,g 212 218 228 243,r 222 230 242 255,g 238 240 275 280,g 275 288 292 318,g 290 294 365 404,r 305 343 380 386,g 342 343 357 375,r 270 278 337 345,r 280 281 285 310,g 295 312 322 332,g 310 321 353 380,r 305 337 374 375,g 330 342 359 382,r 292 320 352 355,r 280 286 292 330,g 275 297 312 325,g 298 314 320 325,g 312 318 333 355,r 310 322 342 345,r 312 320 322 340,r 308 312 342 352,g 300 313 322 340,r 258 289 322 325,g 290 294 328 345,g 330 343 346 362,r 335 343 356 360,r 330 340 356 362,g 312 333 345 352,g 335 394 400 402,r 365 367 404 406,g 390 390 540 542,r 522 552 564 575,r 526 541 545 555,g 535 543 557 575,g 545 561 585 624,g 570 574 600 624,g 575 591 624 635,g 620 633 680 682,g 684 684 735 750,r 682 706 745 747,g 678 702 708 735,g 680 720 728 750,g 725 728 790 795';
  var M = 'g 760 800 840 850,g 780 840 900 905';
  var B = 'g -5 0 33 35,g 15 22 35 48,g 25 36 40 55,g 30 47 68 125,g 60 75 122 125,r 65 85 130 165,g 50 80 112 115,r 45 76 106 125,k 60 72 75 90,g 65 70 82 85,g 85 92 125 140,g 95 115 135 140,g 125 135 176 178,g 180 183 245 247,g 243 243 318 320,r 225 262 317 320,r 160 165 256 258,g 160 167 210 240,r 115 120 205 210,g 62 85 132 140,r 112 128 138 148,r 125 130 140 148,g 113 115 175 178,g 165 170 190 198,r 130 153 178 182,r 128 134 155 165,g 130 136 150 165,g 130 140 160 163,r 118 123 137 142,g 132 136 142 160,g 140 143 188 198,r 170 183 186 213,r 175 178 190 195,r 140 146 178 182,k 125 135 137 150,r 88 104 133 140,g 88 92 110 130,g 115 122 130 140,g 113 125 140 150,g 112 118 135 140,g 118 125 135 148,g 120 128 135 145,g 120 126 135 145,g 122 125 135 145,g 143 145 183 185,r 150 166 185 207,g 165 168 182 185,g 180 183 195 205,r 175 180 195 206,g 160 175 188 195,g 175 187 230 255,r 205 215 236 245,r 215 218 236 240,g 210 224 235 245,g 225 232 236 245,g 225 230 242 245,g 240 245 280 282,g 280 286 313 320,r 250 268 312 315,g 285 295 348 350,g 340 345 358 375,r 338 346 355 368,r 320 331 353 355,r 322 325 332 345,g 336 337 404 405,r 355 370 384 392,g 355 366 390 415,g 385 390 440 442,r 415 436 443 458,g 425 441 452 470,g 430 440 456 462,g 450 455 490 492,g 495 495 548 550,r 518 537 560 572,g 540 540 590 594,g 565 580 608 612,g 590 612 638 640,r 560 590 632 670,g 590 592 630 634,g 640 657 680 690,g 665 678 698 705,r 665 680 695 712,r 605 610 688 690,g 588 608 655 660,g 630 655 660 685,r 635 656 667 675,r 600 625 645 655,r 517 517 598 612';
  function parse(s, base) {
    return s.split(',').map(function (r) {
      var p = r.split(' ');
      return [p[0], base + p[1] / 3, base + p[2] / 3, base + p[3] / 3, base + p[4] / 3];
    });
  }
  var candles = parse(A, 100).concat(parse(M, 100), parse(B, 400));
  var cg = el('g', { 'shape-rendering': 'crispEdges' });
  candles.forEach(function (c, i) {
    var x = X(i), col = c[0] === 'r' ? RED : c[0] === 'g' ? GRN : '#000';
    var top = Math.round(c[2]), bot = Math.round(c[3]);
    if (c[0] === 'k') {
      el('rect', { x: x - 3, y: top, width: 7, height: 1, fill: col }, cg);
      el('rect', { x: x, y: Math.round(c[1]), width: 1, height: Math.round(c[4] - c[1]), fill: col }, cg);
      return;
    }
    el('rect', { x: x, y: Math.round(c[1]), width: 1, height: Math.max(1, Math.round(c[4] - c[1])), fill: col }, cg);
    if (bot - top < 3) { el('rect', { x: x - 2, y: top, width: 5, height: 2, fill: col }, cg); return; }
    if (c[0] === 'r') el('rect', { x: x - 1.5, y: top + .5, width: 4, height: bot - top - 1, fill: BG, stroke: col }, cg);
    else el('rect', { x: x - 2, y: top, width: 5, height: bot - top, fill: col }, cg);
  });

  // moving averages: [x, y] in the two sampled coordinate frames
  function line(a, b, col) {
    var pts = a.map(function (p) { return (510 + p[0] / 3).toFixed(1) + ',' + (100 + p[1] / 3).toFixed(1); })
      .concat(b.map(function (p) { return (1000 + p[0] / 2.53).toFixed(1) + ',' + (400 + p[1] / 3).toFixed(1); }));
    el('polyline', { points: pts.join(' '), fill: 'none', stroke: col, 'stroke-width': 1 });
  }
  line([[1500, 355], [1360, 300], [1300, 300], [1220, 308], [1150, 325], [952, 382]].reverse(),
    [[670, 0], [800, 90], [950, 160], [1100, 210], [1240, 260], [1384, 343]], '#808080');
  line([[592, 437], [650, 410], [750, 355], [830, 310], [950, 265], [1050, 250], [1140, 258], [1280, 300], [1400, 370], [1500, 438]],
    [[430, 0], [570, 110], [700, 145], [800, 155], [930, 165], [1100, 225], [1220, 310], [1384, 440]], '#0a7a0a');
  line([[232, 605], [280, 598], [320, 580], [400, 490], [500, 370], [570, 290], [640, 225], [680, 200], [760, 197], [850, 235], [950, 260], [1040, 305], [1150, 320], [1250, 330], [1300, 350], [1380, 410], [1450, 490], [1500, 550]],
    [[240, 0], [290, 75], [340, 125], [420, 145], [520, 172], [600, 145], [720, 140], [860, 155], [960, 205], [1100, 305], [1200, 420], [1300, 520], [1384, 585]], '#f0f');
  line([[52, 613], [88, 633], [160, 612], [232, 603], [320, 535], [345, 470], [400, 330], [450, 250], [500, 195], [540, 187], [600, 183], [640, 195], [700, 203], [750, 205], [800, 235], [850, 270], [900, 300], [930, 320], [960, 330], [1000, 322], [1060, 325], [1150, 315], [1250, 335], [1290, 400], [1350, 460], [1430, 600], [1500, 680]],
    [[140, 0], [175, 50], [235, 95], [290, 160], [340, 185], [410, 190], [450, 160], [520, 150], [600, 145], [650, 125], [720, 125], [800, 155], [880, 200], [1000, 295], [1100, 370], [1170, 440], [1250, 560], [1310, 625], [1350, 650], [1384, 640]], '#2f62e0');
  line([[34, 648], [88, 643], [106, 625], [178, 582], [232, 604], [250, 590], [290, 510], [320, 460], [345, 400], [375, 320], [410, 255], [448, 205], [500, 155], [525, 155], [580, 210], [600, 215], [630, 215], [660, 197], [700, 197], [750, 215], [790, 265], [830, 310], [850, 325], [880, 325], [900, 315], [930, 315], [960, 338], [1000, 322], [1040, 313], [1090, 320], [1150, 318], [1200, 322], [1250, 350], [1270, 390], [1300, 450], [1350, 555], [1380, 572], [1400, 610], [1430, 660], [1500, 740]],
    [[90, 0], [130, 60], [170, 105], [200, 85], [235, 100], [260, 150], [290, 220], [325, 238], [360, 165], [390, 140], [430, 155], [480, 140], [520, 145], [550, 158], [590, 145], [620, 125], [660, 118], [720, 125], [770, 150], [830, 190], [870, 215], [910, 235], [940, 265], [975, 320], [1030, 335], [1060, 365], [1100, 410], [1140, 455], [1175, 520], [1225, 590], [1260, 630], [1300, 658], [1330, 660], [1365, 650], [1384, 622]], '#000');

  // support lines
  el('rect', { x: 513, y: 472, width: 1103, height: 3, fill: RED });
  el('rect', { x: 513, y: 630, width: 1103, height: 3, fill: RED });
  el('path', { d: 'M1592 572.500H1616M1605 648.500H1616', stroke: '#1a2a8a', fill: 'none' });
  el('path', { d: 'M1544.500 645V656', stroke: '#999', fill: 'none' });

  // hand-drawn red arrow
  el('path', { d: 'M1511 548L1540 608M1530 599L1540 608L1541 590', stroke: RED, 'stroke-width': 3.500, fill: 'none' });

  // volume bars: index -> top in sampled frames
  var lowVol = { 4: 'r172', 5: 'r169', 8: 'g172', 10: 'g172', 13: 'r170', 14: 'r157', 15: 'g167', 17: 'r168', 18: 'r158', 19: 'r155', 20: 'g159', 21: 'r168', 22: 'g171', 23: 'r163', 24: 'r163', 25: 'g162', 26: 'r171', 27: 'r171', 28: 'g165', 29: 'g171', 30: 'g168', 31: 'r165', 32: 'r171', 34: 'g171', 35: 'r171', 37: 'g171', 39: 'g171', 43: 'g171', 44: 'g165', 45: 'r171', 47: 'r171', 50: 'g171', 63: 'g171', 68: 'g171', 70: 'g162', 71: 'r166', 72: 'r169', 73: 'g171', 74: 'g165', 75: 'g171', 76: 'g171', 77: 'g168', 78: 'g159', 79: 'r166', 80: 'g168', 81: 'g168', 82: 'g162', 83: 'g162', 84: 'g165', 85: 'g159', 86: 'g162', 87: 'g159', 88: 'g144', 89: 'g150', 90: 'r127', 91: 'g138', 92: 'r142', 93: 'r160', 94: 'g159', 95: 'g135', 96: 'g141', 97: 'g141', 98: 'g132', 99: 'g114', 100: 'r97', 101: 'r102', 102: 'g126', 103: 'r114', 104: 'g93', 105: 'r148', 106: 'g141', 107: 'g126', 108: 'g144', 109: 'r139', 110: 'r151', 111: 'g153', 112: 'r163', 113: 'r157' };
  var highVol = 'g813,g798,r799,r820,r811,r805,r787,g801,g813,g801,g807,g813,g819,g801,g798,g777,r772,g798,g786,r796,g789,g756,r757,r787,g777,g765,g756,g714,g666,r610,g594,g618,r643,r663,r718,g582,r616,g582,g600,r538,g639,g678,g651,g531,r466,g489,g510,g540,r58,g345,g477,g402,r385,r235,g327,g414,r490,r430,r223'.split(',');
  var vg = el('g', { 'shape-rendering': 'crispEdges' });
  function bar(i, col, top) {
    var x = X(i), t = Math.round(top);
    if (col === 'r') el('rect', { x: x - 1.5, y: t + .5, width: 4, height: 938 - t, fill: BG, stroke: RED }, vg);
    else el('rect', { x: x - 2, y: t, width: 5, height: 938 - t, fill: GRN }, vg);
  }
  Object.keys(lowVol).forEach(function (k) { var v = lowVol[k]; bar(+k, v[0], 880 + v.slice(1) / 3); });
  highVol.forEach(function (v, n) { bar(114 + n, v[0], 660 + v.slice(1) / 3); });

  // open interest line
  var op = [[150, 172], [180, 170], [195, 166], [230, 165], [250, 158], [275, 151], [295, 154], [315, 148], [350, 148], [360, 145], [370, 148], [465, 148], [470, 151], [515, 151], [520, 154], [595, 154], [600, 157], [890, 157], [895, 154], [945, 154], [960, 145], [1040, 145], [1040, 142], [1080, 142], [1095, 136], [1130, 130], [1180, 105], [1220, 78], [1240, 58], [1255, 49], [1280, 49], [1295, 40], [1330, 0]]
    .map(function (p) { return (510 + p[0] / 2.24).toFixed(1) + ',' + (880 + p[1] / 3).toFixed(1); });
  var op2 = [[0, 645], [15, 633], [50, 631], [70, 637], [90, 631], [125, 631], [155, 617], [205, 616], [240, 592], [285, 563], [320, 549], [360, 538], [380, 515], [430, 485], [465, 468], [500, 424], [520, 424], [545, 365], [575, 322], [595, 343], [610, 343], [628, 278], [647, 296], [682, 240], [703, 217], [738, 217], [755, 205], [772, 165], [790, 162], [808, 150], [826, 121], [843, 121], [861, 142], [898, 112], [934, 58], [952, 76], [970, 61], [1006, 73], [1024, 67], [1042, 110]]
    .map(function (p) { return (1200 + p[0] / 3).toFixed(1) + ',' + (660 + p[1] / 3).toFixed(1); });
  el('polyline', { points: op.concat(['1115,877', '1128,876', '1150,876', '1175,875'], op2).join(' '), fill: 'none', stroke: '#000', 'stroke-width': 1 });

  // labels
  txt(518, 108, 'MA组合(5,10,20,40,60,0)', 'm0 m0c');
  el('path', { d: 'M688 103L693 108L698 103', stroke: '#4169e1', fill: 'none' });
  txt(711, 108, 'MA5 14236.00', 'm1');
  txt(816, 108, 'MA10 14067.00', 'm2');
  txt(929, 108, 'MA20 14596.75', 'm3');
  txt(1042, 108, 'MA40 16053.38', 'm4');
  txt(1155, 108, 'MA60 17030.00', 'm5');
  txt(644, 130, '28400', 'red');
  txt(1093, 522, '17255', 'grn');
  txt(1490, 653, '13365', 'grn');
  txt(1575, 468, '18246', 'red');
  txt(1575, 626, '13520', 'red');
  txt(470, 251, '25000', 'ax');
  txt(470, 420, '20000', 'ax');
  txt(470, 811, '38000', 'ax');
  txt(514, 650, '173天', 'days');
  txt(518, 672, 'CJL(0)', 'm0');
  el('path', { d: 'M562 667L567 672L572 667', stroke: '#4169e1', fill: 'none' });
  txt(585, 672, '58764.00(51:49)', 'm1');
  txt(705, 672, 'OPID 56999.00', 'm1');
  [['2021/02/01', 528], ['2021/04/01', 756], ['2021/06/01', 990], ['2021/08/02', 1248], ['2021/10/11', 1506]].forEach(function (d) {
    txt(d[1], 955, d[0], 'dt');
  });
})();
```
